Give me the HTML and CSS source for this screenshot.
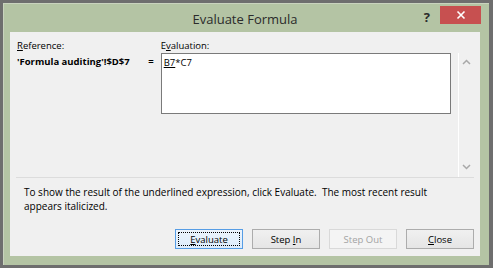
FILE: index.html
```html
<!DOCTYPE html>
<html lang="en">
<head>
  <meta charset="UTF-8">
  <title>Evaluate Formula</title>
  <link rel="stylesheet" href="styles.css">
</head>
<body>
  <div class="window">
    <div class="frame">
      <!-- title bar -->
      <div class="titlebar">
        <span></span>
        <span class="title">Evaluate Formula</span>
        <div class="title-btns">
          <span class="help">?</span>
          <span class="close">
            <svg width="10" height="10" viewBox="0 0 10 10"><path d="M1.5 1.5 L8.5 8.5 M8.5 1.5 L1.5 8.5" stroke="#fff" stroke-width="1.6" fill="none"/></svg>
          </span>
        </div>
      </div>
      <!-- dialog body -->
      <div class="client">
        <div class="eval-area">
          <div class="ref-col">
            <div class="label"><u>R</u>eference:</div>
            <div class="ref-row">
              <span class="ref-name">'Formula auditing'!$D$7</span>
              <span class="eq">=</span>
            </div>
          </div>
          <div class="eval-col">
            <div class="label">E<u>v</u>aluation:</div>
            <div class="eval-box"><span class="cur">B7</span>*C7</div>
          </div>
          <div class="scroll">
            <svg width="9" height="6" viewBox="0 0 9 6"><path d="M1 5 L4.5 1.5 L8 5" stroke="#a8a8a8" stroke-width="1.5" fill="none"/></svg>
            <svg width="9" height="6" viewBox="0 0 9 6"><path d="M1 1 L4.5 4.5 L8 1" stroke="#a8a8a8" stroke-width="1.5" fill="none"/></svg>
          </div>
        </div>
        <p class="hint">To show the result of the underlined expression, click Evaluate.&nbsp; The most recent result<br>appears italicized.</p>
        <div class="buttons">
          <button class="btn focused"><span class="focus-ring"><u>E</u>valuate</span></button>
          <button class="btn"><span>Step <u>I</u>n</span></button>
          <button class="btn" disabled><span>Step Out</span></button>
          <button class="btn"><span><u>C</u>lose</span></button>
        </div>
      </div>
    </div>
  </div>
</body>
</html>
```

FILE: styles.css
```css
body {
  margin: 0;
  font-family: "Open Sans", "Noto Sans", sans-serif;
  background: #6e6e6e;
}
.window {
  width: 493px;
  height: 268px;
  box-sizing: border-box;
  padding: 3px 4px 3px 3px;
  background: #6e6e6e;
}
.frame {
  height: 100%;
  box-sizing: border-box;
  background: #b4c4a4;
  border-top: 1px solid #c9d3be;
  border-left: 1px solid #c9d3be;
  padding: 0 9px 9px 6px;
  display: flex;
  flex-direction: column;
}
.titlebar {
  height: 28px;
  display: grid;
  grid-template-columns: 1fr auto 1fr;
  align-items: start;
}
.title {
  font-size: 13px;
  color: #2b2b2b;
  margin-top: 7px;
  line-height: 16px;
}
.title-btns {
  justify-self: end;
  display: flex;
  align-items: flex-start;
  margin-right: -1px;
}
.help {
  font-size: 13px;
  font-weight: bold;
  color: #2b2b2b;
  line-height: 14px;
  margin-top: 6px;
  margin-right: 10px;
}
.close {
  width: 41px;
  height: 18px;
  margin-top: 2px;
  background: #c75050;
  display: flex;
  align-items: center;
  justify-content: center;
}
.client {
  flex: 1;
  background: #f0f0f0;
  padding: 8px 6px 0 6px;
  font-size: 9.5px;
  color: #000;
}
.eval-area {
  display: flex;
  height: 137px;
  border-bottom: 1px solid #dcdcdc;
}
.label {
  line-height: 12px;
  height: 12px;
  margin-bottom: 1px;
}
.ref-col {
  width: 145px;
  padding-left: 1px;
  box-sizing: border-box;
}
.ref-row {
  display: flex;
  justify-content: space-between;
  line-height: 15px;
  padding-top: 1px;
}
.ref-name {
  font-weight: bold;
}
.eq {
  font-weight: bold;
  margin-right: 7px;
}
.eval-col {
  width: 291px;
}
.eval-box {
  height: 61px;
  box-sizing: border-box;
  background: #fff;
  border: 1px solid #7a7a7a;
  padding: 1px 2px;
  line-height: 15px;
}
.cur {
  text-decoration: underline;
  text-decoration-thickness: 1px;
}
.scroll {
  width: 15px;
  margin-left: 7px;
  margin-top: 13px;
  border-left: 1px solid #fff;
  display: flex;
  flex-direction: column;
  justify-content: space-between;
  align-items: center;
  padding: 6px 0 7px 0;
}
.hint {
  margin: 7px 0 0 8px;
  font-size: 10px;
  line-height: 14px;
}
.buttons {
  display: flex;
  justify-content: flex-end;
  gap: 9px;
  margin-top: 16px;
}
.btn {
  width: 68px;
  height: 20px;
  box-sizing: border-box;
  font-family: inherit;
  font-size: 9.5px;
  color: #000;
  border: 1px solid #acacac;
  background: linear-gradient(#f0f0f0, #e5e5e5);
  padding: 0;
  display: flex;
  align-items: center;
  justify-content: center;
}
.btn:disabled {
  color: #a3a3a3;
  border-color: #d9d9d9;
  background: #f4f4f4;
}
.btn.focused {
  border-color: #569de5;
  background: linear-gradient(#ecf4fc, #dcecfc);
  padding: 2px;
}
.focus-ring {
  flex: 1;
  align-self: stretch;
  border: 1px dotted #000;
  display: flex;
  align-items: center;
  justify-content: center;
}
```
